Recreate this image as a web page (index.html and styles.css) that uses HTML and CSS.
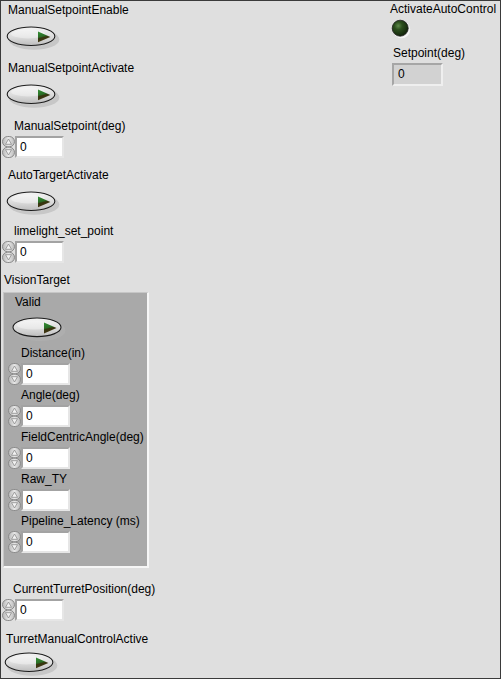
FILE: index.html
```html
<!DOCTYPE html>
<html>
<head>
<meta charset="utf-8">
<link rel="stylesheet" href="styles.css">
</head>
<body>
<svg width="0" height="0" class="defs">
  <defs>
    <linearGradient id="tg" x1="0" y1="0" x2="0" y2="1">
      <stop offset="0" stop-color="#f4f4f4"/>
      <stop offset="0.55" stop-color="#dcdcdc"/>
      <stop offset="1" stop-color="#bdbdbd"/>
    </linearGradient>
    <linearGradient id="ar" x1="0" y1="0" x2="0.3" y2="1">
      <stop offset="0" stop-color="#359035"/>
      <stop offset="0.5" stop-color="#2a6e26"/>
      <stop offset="0.62" stop-color="#363610"/>
      <stop offset="1" stop-color="#463612"/>
    </linearGradient>
    <linearGradient id="sp" x1="0" y1="0" x2="1" y2="0">
      <stop offset="0" stop-color="#b8b8b8"/>
      <stop offset="0.5" stop-color="#e6e6e6"/>
      <stop offset="1" stop-color="#bcbcbc"/>
    </linearGradient>
    <radialGradient id="led" cx="0.38" cy="0.35" r="0.7">
      <stop offset="0" stop-color="#5e8a4c"/>
      <stop offset="0.35" stop-color="#2c4f1e"/>
      <stop offset="1" stop-color="#0f1f08"/>
    </radialGradient>
    <symbol id="toggle" viewBox="0 0 56 26">
      <ellipse cx="28" cy="13.5" rx="25.5" ry="10.5" fill="#b3b3b3" opacity="0.55"/>
      <ellipse cx="25" cy="10.3" rx="24" ry="9.3" fill="url(#tg)" stroke="#1c1c1c" stroke-width="1.1"/>
      <ellipse cx="22" cy="8" rx="17" ry="4.5" fill="#ffffff" opacity="0.35"/>
      <polygon points="32,5.5 44.5,11 32,16.5" fill="url(#ar)"/>
    </symbol>
    <symbol id="spin" viewBox="0 0 13 22">
      <rect x="0.5" y="0.5" width="12" height="10.3" rx="5.2" fill="url(#sp)" stroke="#8a8a8a"/>
      <rect x="0.5" y="11.2" width="12" height="10.3" rx="5.2" fill="url(#sp)" stroke="#8a8a8a"/>
      <polygon points="6.5,3 9.5,8.3 3.5,8.3" fill="#f2f2f2" stroke="#8c8c8c" stroke-width="0.8"/>
      <polygon points="6.5,19 9.5,13.7 3.5,13.7" fill="#f2f2f2" stroke="#8c8c8c" stroke-width="0.8"/>
    </symbol>
  </defs>
</svg>

<div class="panel">
  <div class="left">
    <div class="lbl lbl-a">ManualSetpointEnable</div>
    <svg class="toggle tg-a"><use href="#toggle"/></svg>

    <div class="lbl lbl-b">ManualSetpointActivate</div>
    <svg class="toggle tg-a"><use href="#toggle"/></svg>

    <div class="lbl lbl-c">ManualSetpoint(deg)</div>
    <div class="numeric num-a">
      <svg class="spin"><use href="#spin"/></svg>
      <div class="box">0</div>
    </div>

    <div class="lbl lbl-d">AutoTargetActivate</div>
    <svg class="toggle tg-a"><use href="#toggle"/></svg>

    <div class="lbl lbl-e">limelight_set_point</div>
    <div class="numeric num-a">
      <svg class="spin"><use href="#spin"/></svg>
      <div class="box">0</div>
    </div>

    <div class="lbl lbl-f">VisionTarget</div>
    <div class="cluster">
      <div class="lbl cl-valid">Valid</div>
      <svg class="toggle cl-toggle"><use href="#toggle"/></svg>

      <div class="lbl cl-lbl">Distance(in)</div>
      <div class="numeric cl-num">
        <svg class="spin"><use href="#spin"/></svg>
        <div class="box">0</div>
      </div>

      <div class="lbl cl-lbl">Angle(deg)</div>
      <div class="numeric cl-num">
        <svg class="spin"><use href="#spin"/></svg>
        <div class="box">0</div>
      </div>

      <div class="lbl cl-lbl">FieldCentricAngle(deg)</div>
      <div class="numeric cl-num">
        <svg class="spin"><use href="#spin"/></svg>
        <div class="box">0</div>
      </div>

      <div class="lbl cl-lbl">Raw_TY</div>
      <div class="numeric cl-num">
        <svg class="spin"><use href="#spin"/></svg>
        <div class="box">0</div>
      </div>

      <div class="lbl cl-lbl">Pipeline_Latency (ms)</div>
      <div class="numeric cl-num">
        <svg class="spin"><use href="#spin"/></svg>
        <div class="box">0</div>
      </div>
    </div>

    <div class="lbl lbl-g">CurrentTurretPosition(deg)</div>
    <div class="numeric num-a">
      <svg class="spin"><use href="#spin"/></svg>
      <div class="box">0</div>
    </div>

    <div class="lbl lbl-h">TurretManualControlActive</div>
    <svg class="toggle tg-b"><use href="#toggle"/></svg>
  </div>

  <div class="right">
    <div class="lbl r-lbl1">ActivateAutoControl</div>
    <svg class="led" viewBox="0 0 20 20">
      <circle cx="10.6" cy="10.6" r="8.6" fill="#f6f6f6"/>
      <circle cx="9.2" cy="9.2" r="8" fill="url(#led)" stroke="#1e1e1e" stroke-width="0.8"/>
    </svg>
    <div class="lbl r-lbl2">Setpoint(deg)</div>
    <div class="indicator">0</div>
  </div>
</div>
</body>
</html>
```

FILE: styles.css
```css
html, body {
  margin: 0;
  padding: 0;
  background: #dfdfdf;
}

.defs {
  position: absolute;
  width: 0;
  height: 0;
}

.panel {
  box-sizing: border-box;
  width: 501px;
  height: 679px;
  border: 1px solid #3a3a3a;
  background: #dfdfdf;
  display: flex;
  font-family: "Liberation Sans", Arial, sans-serif;
  font-size: 12px;
  color: #000;
  overflow: hidden;
}

.left {
  width: 389px;
  display: flex;
  flex-direction: column;
  align-items: flex-start;
}

.right {
  display: flex;
  flex-direction: column;
  align-items: flex-start;
}

.lbl {
  line-height: 14px;
  height: 14px;
  white-space: nowrap;
}

.toggle {
  display: block;
  width: 56px;
  height: 26px;
}

/* left column positions */
.lbl-a { margin: 2px 0 0 7px; }
.lbl-b { margin: 9px 0 0 7px; }
.lbl-c { margin: 9px 0 0 13px; }
.lbl-d { margin: 10px 0 0 7px; }
.lbl-e { margin: 8px 0 0 13px; }
.lbl-f { margin: 10px 0 0 3px; }
.lbl-g { margin: 14px 0 0 12px; }
.lbl-h { margin: 11px 0 0 5px; }

.tg-a { margin: 9px 0 0 5px; }
.tg-b { margin: 6px 0 0 3px; }

.numeric {
  display: flex;
  align-items: flex-start;
}

.num-a { margin: 3px 0 0 1px; }

.spin {
  display: block;
  width: 13px;
  height: 22px;
}

.box {
  box-sizing: border-box;
  width: 49px;
  height: 22px;
  background: #ffffff;
  border-style: solid;
  border-width: 2px;
  border-color: #a3a3a3 #e6e6e6 #e6e6e6 #a3a3a3;
  padding-left: 3px;
  line-height: 18px;
}

/* cluster */
.cluster {
  box-sizing: border-box;
  width: 146px;
  height: 278px;
  margin: 5px 0 0 2px;
  background: #a9a9a9;
  border-style: solid;
  border-width: 1px 2px 2px 1px;
  border-color: #c6c6c6 #f6f6f6 #f6f6f6 #c6c6c6;
  display: flex;
  flex-direction: column;
  align-items: flex-start;
}

.cl-valid { margin: 2px 0 0 11px; }
.cl-toggle { margin: 8px 0 0 8px; }
.cl-lbl { margin: 3px 0 0 17px; }
.cl-num { margin: 3px 0 0 4px; }

/* right column */
.r-lbl1 { margin: 1px 0 0 0; }
.led {
  display: block;
  width: 20px;
  height: 20px;
  margin: 3px 0 0 1px;
}
.r-lbl2 { margin: 7px 0 0 3px; }
.indicator {
  box-sizing: border-box;
  width: 51px;
  height: 23px;
  margin: 3px 0 0 2px;
  background: #d2d2d2;
  border-style: solid;
  border-width: 2px;
  border-color: #a6a6a6 #efefef #efefef #a6a6a6;
  padding-left: 4px;
  line-height: 19px;
}
```
